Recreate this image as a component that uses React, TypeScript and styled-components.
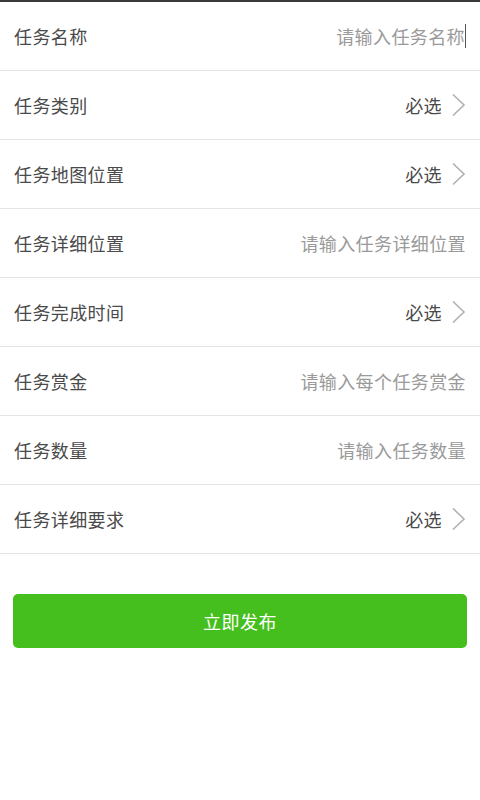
import React from 'react';
import styled, { createGlobalStyle } from 'styled-components';

const GlobalStyle = createGlobalStyle`
  html, body {
    margin: 0;
    padding: 0;
    background: #fff;
  }
  body {
    font-family: "Noto Sans CJK SC", "Noto Sans", sans-serif;
  }
`

const Page = styled.div`
  width: 480px;
  min-height: 800px;
  background: #fff;
  border-top: 2px solid #3a3a3a;
  box-sizing: border-box;
`

const Form = styled.div`
  display: flex;
  flex-direction: column;
`

const Row = styled.div`
  height: 68px;
  display: flex;
  align-items: center;
  justify-content: space-between;
  padding: 0 14px;
  border-bottom: 1px solid #e4e4e4;
`

const Label = styled.span`
  font-size: 18px;
  color: #4a4a4a;
  letter-spacing: 0.4px;
`

const Placeholder = styled.span`
  font-size: 18px;
  color: #9a9a9a;
  display: flex;
  align-items: center;
  letter-spacing: 0.4px;
`

const Caret = styled.span`
  display: inline-block;
  width: 1px;
  height: 24px;
  background: #555;
`

const Select = styled.span`
  display: flex;
  align-items: center;
  gap: 9px;
  font-size: 18px;
  color: #4a4a4a;
  letter-spacing: 0.4px;
`

const Chevron = () => (
  <svg width="15" height="24" viewBox="0 0 15 24">
    <path d="M2 1.5 L13 12 L2 22.5" fill="none" stroke="#b0b0b0" strokeWidth="1.6" />
  </svg>
)

const SubmitWrap = styled.div`
  padding: 40px 13px 0;
`

const SubmitButton = styled.button`
  width: 100%;
  height: 54px;
  border: none;
  border-radius: 5px;
  background: #44bf1d;
  color: #fff;
  font-family: inherit;
  font-size: 18px;
  letter-spacing: 0.5px;
`

type Field = { label: string; hint?: string; select?: boolean; caret?: boolean }

const fields: Field[] = [
  { label: '任务名称', hint: '请输入任务名称', caret: true },
  { label: '任务类别', select: true },
  { label: '任务地图位置', select: true },
  { label: '任务详细位置', hint: '请输入任务详细位置' },
  { label: '任务完成时间', select: true },
  { label: '任务赏金', hint: '请输入每个任务赏金' },
  { label: '任务数量', hint: '请输入任务数量' },
  { label: '任务详细要求', select: true },
]

const App = () => {
  return (
    <Page>
      <GlobalStyle />
      <Form>
        {fields.map(f => (
          <Row key={f.label}>
            <Label>{f.label}</Label>
            {f.select ? (
              <Select>必选<Chevron /></Select>
            ) : (
              <Placeholder>{f.hint}{f.caret && <Caret />}</Placeholder>
            )}
          </Row>
        ))}
      </Form>
      <SubmitWrap>
        <SubmitButton>立即发布</SubmitButton>
      </SubmitWrap>
    </Page>
  );
}

export default App;
